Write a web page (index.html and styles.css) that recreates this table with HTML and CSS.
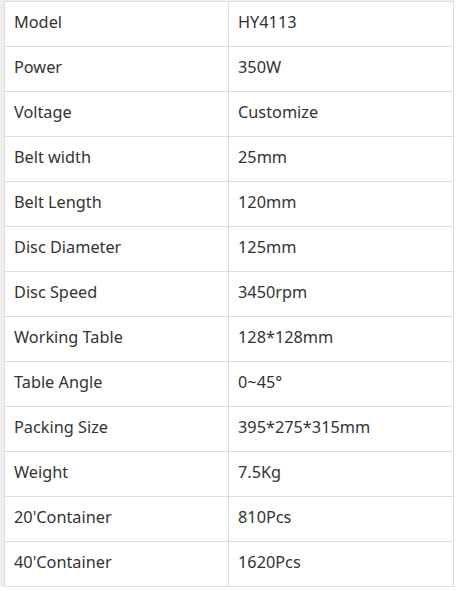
FILE: index.html
```html
<!DOCTYPE html>
<html>
<head>
<meta charset="utf-8">
<link rel="stylesheet" href="styles.css">
</head>
<body>
<div class="page">
<table class="spec">
<tbody>
<tr><td class="k">Model</td><td class="v">HY4113</td></tr>
<tr><td class="k">Power</td><td class="v">350W</td></tr>
<tr><td class="k">Voltage</td><td class="v">Customize</td></tr>
<tr><td class="k">Belt width</td><td class="v">25mm</td></tr>
<tr><td class="k">Belt Length</td><td class="v">120mm</td></tr>
<tr><td class="k">Disc Diameter</td><td class="v">125mm</td></tr>
<tr><td class="k">Disc Speed</td><td class="v">3450rpm</td></tr>
<tr><td class="k">Working Table</td><td class="v">128*128mm</td></tr>
<tr><td class="k">Table Angle</td><td class="v">0~45°</td></tr>
<tr><td class="k">Packing Size</td><td class="v">395*275*315mm</td></tr>
<tr><td class="k">Weight</td><td class="v">7.5Kg</td></tr>
<tr><td class="k">20'Container</td><td class="v">810Pcs</td></tr>
<tr><td class="k">40'Container</td><td class="v">1620Pcs</td></tr>
</tbody>
</table>
</div>
</body>
</html>
```
FILE: styles.css
```css
html, body {
  margin: 0;
  padding: 0;
  background: #ffffff;
}
.page {
  border-left: 4px solid #efefef;
  border-top: 1px solid #efefef;
  width: 450px;
}
.spec {
  border-collapse: collapse;
  width: 450px;
  table-layout: fixed;
  font-family: "Noto Sans", "Open Sans", sans-serif;
  font-size: 16.3px;
  color: #333333;
}
.spec td {
  border: 1px solid #dcdcdc;
  height: 45px;
  padding: 0 9px 4px 9px;
  box-sizing: border-box;
  vertical-align: middle;
  white-space: nowrap;
}
.spec td.k {
  width: 224px;
}
```
